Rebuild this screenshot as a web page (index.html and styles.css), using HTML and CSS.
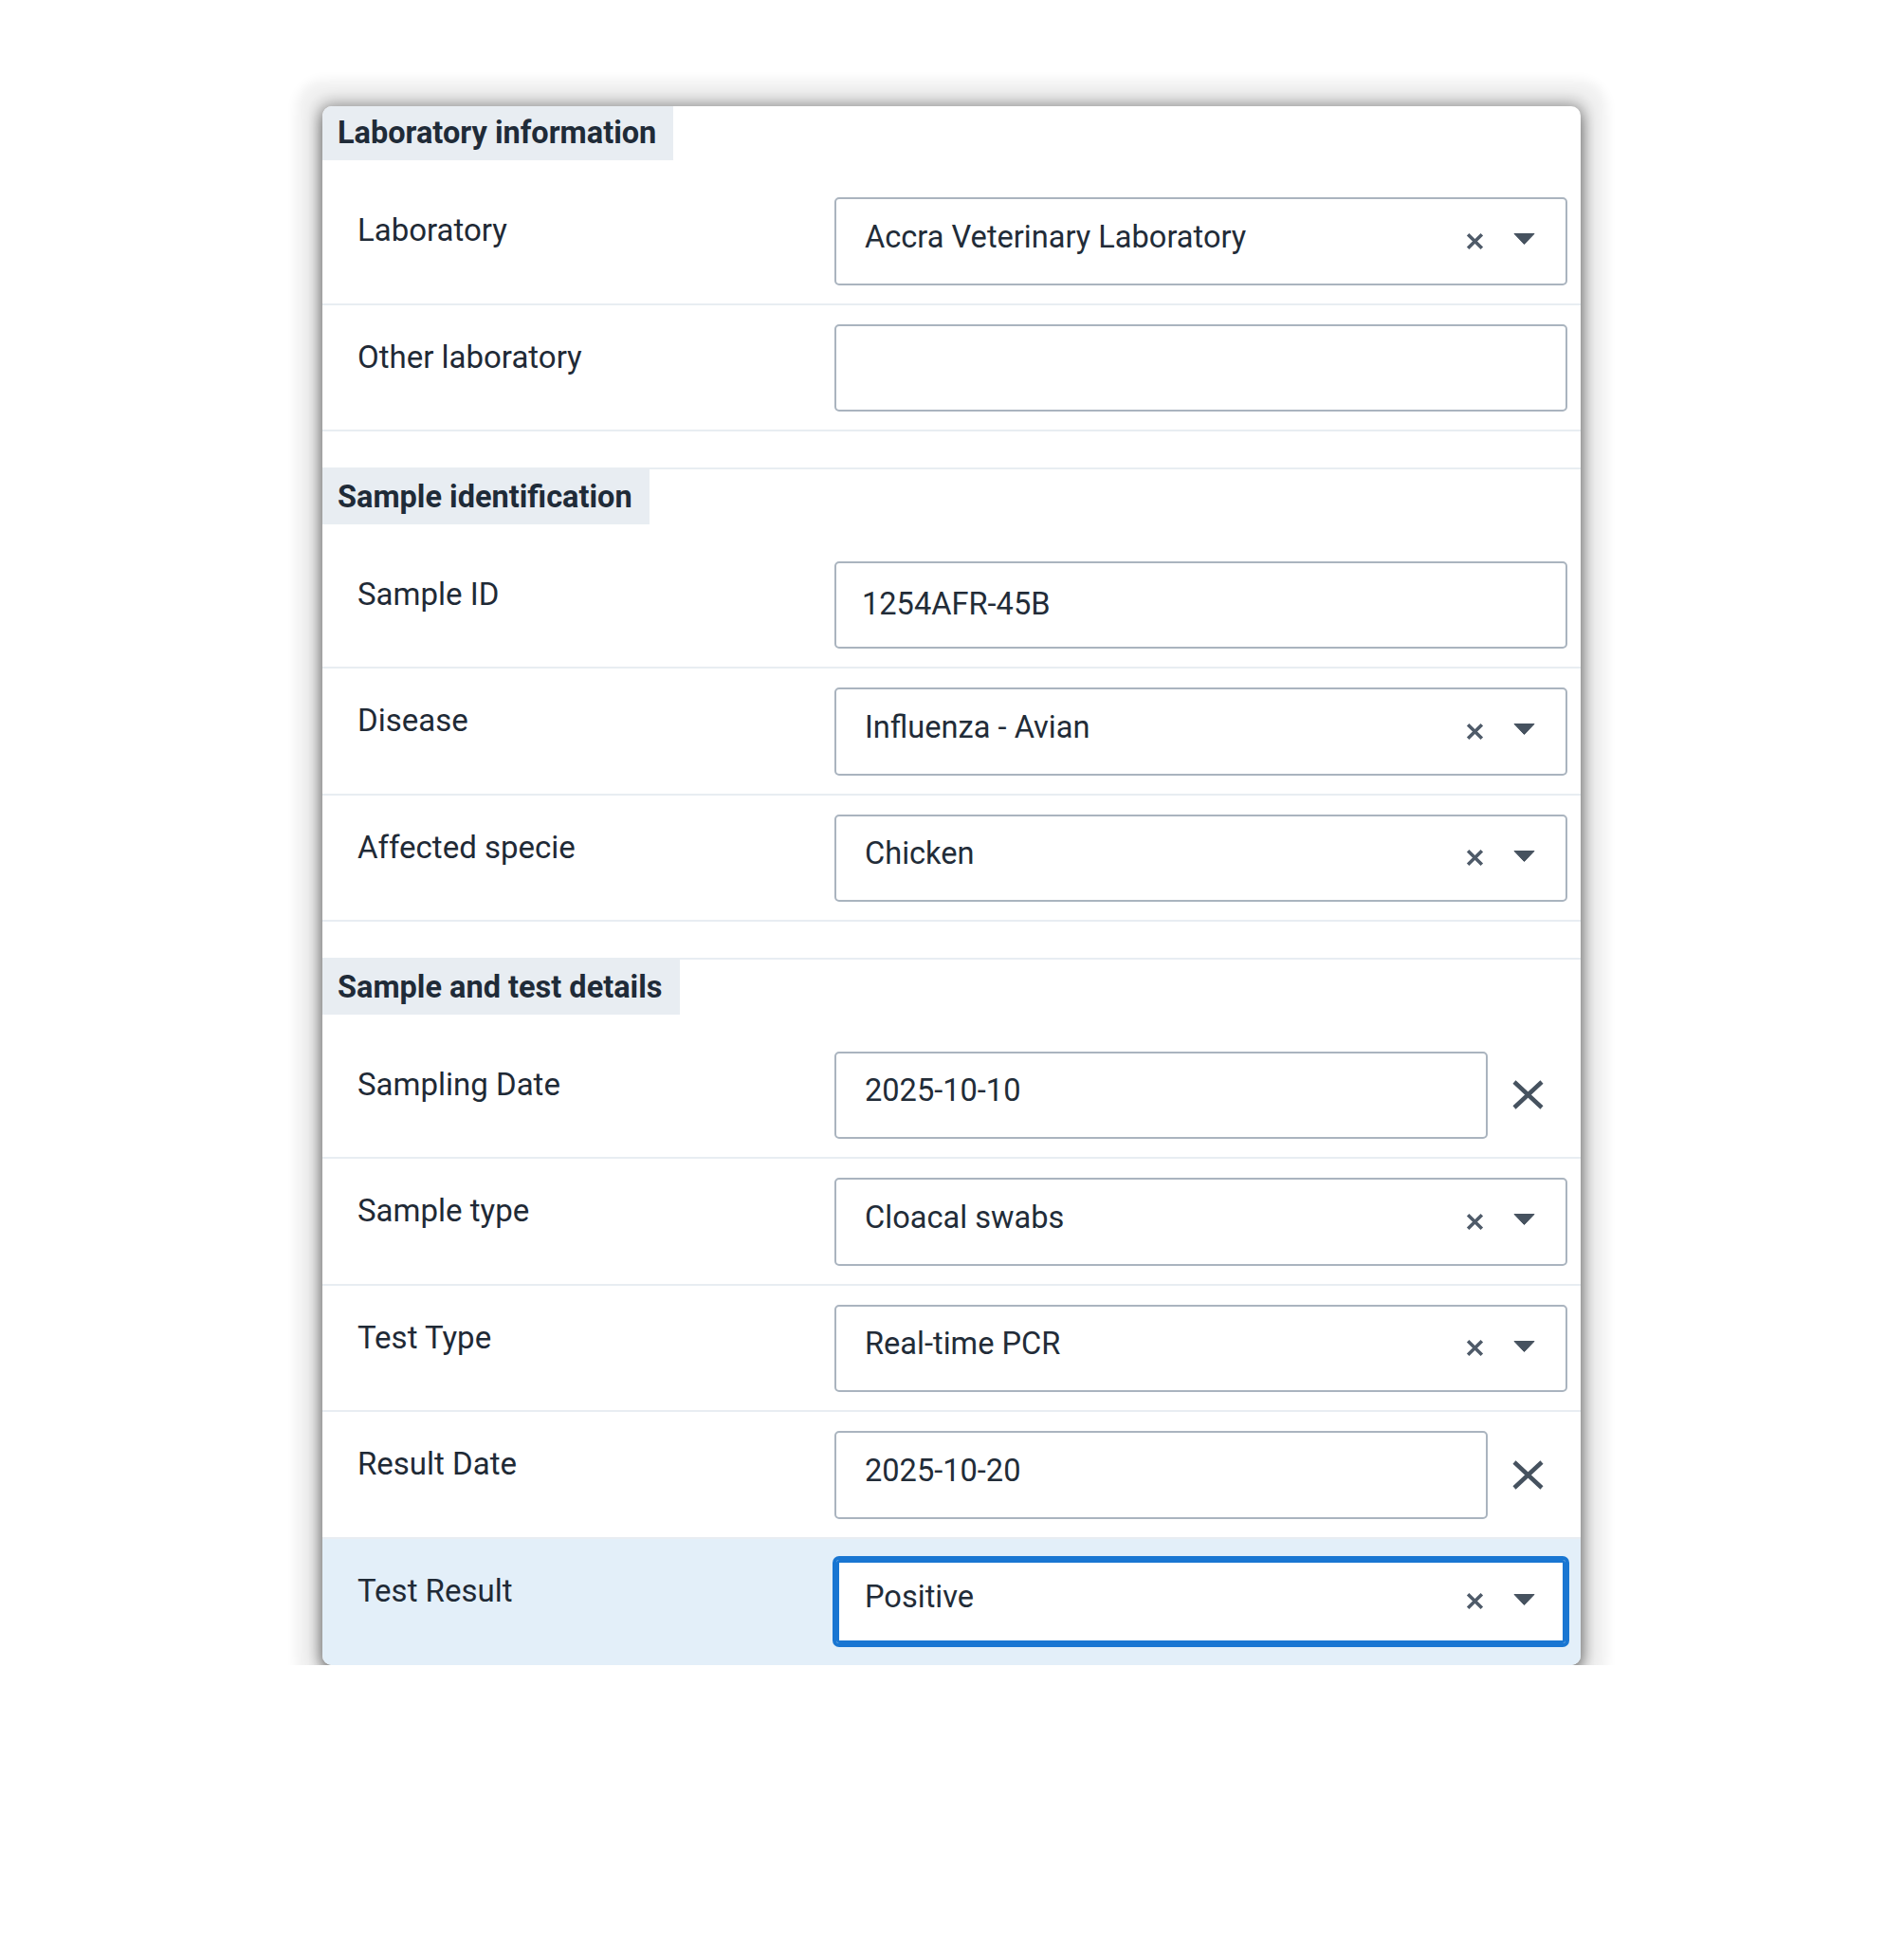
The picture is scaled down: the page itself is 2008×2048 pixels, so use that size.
FILE: index.html
```html
<!DOCTYPE html>
<html lang="en">
<head>
<meta charset="utf-8">
<title>Laboratory form</title>
<link rel="stylesheet" href="styles.css">
</head>
<body>
<div class="page">
  <div class="card">
    <section class="section">
      <h2 class="section-title">Laboratory information</h2>
      <div class="row">
        <div class="label">Laboratory</div>
        <div class="control">
          <div class="select">
            <span class="value">Accra Veterinary Laboratory</span>
            <svg class="clear" viewBox="0 0 20 20"><path d="M3 3L17 17M17 3L3 17"/></svg>
            <svg class="caret" viewBox="0 0 23 12"><path d="M1 0.5H22L11.5 11.5Z"/></svg>
          </div>
        </div>
      </div>
      <div class="row">
        <div class="label">Other laboratory</div>
        <div class="control">
          <div class="input"></div>
        </div>
      </div>
    </section>

    <section class="section">
      <h2 class="section-title">Sample identification</h2>
      <div class="row">
        <div class="label">Sample ID</div>
        <div class="control">
          <div class="input"><span class="value text-value">1254AFR-45B</span></div>
        </div>
      </div>
      <div class="row">
        <div class="label">Disease</div>
        <div class="control">
          <div class="select">
            <span class="value">Influenza - Avian</span>
            <svg class="clear" viewBox="0 0 20 20"><path d="M3 3L17 17M17 3L3 17"/></svg>
            <svg class="caret" viewBox="0 0 23 12"><path d="M1 0.5H22L11.5 11.5Z"/></svg>
          </div>
        </div>
      </div>
      <div class="row">
        <div class="label">Affected specie</div>
        <div class="control">
          <div class="select">
            <span class="value">Chicken</span>
            <svg class="clear" viewBox="0 0 20 20"><path d="M3 3L17 17M17 3L3 17"/></svg>
            <svg class="caret" viewBox="0 0 23 12"><path d="M1 0.5H22L11.5 11.5Z"/></svg>
          </div>
        </div>
      </div>
    </section>

    <section class="section last">
      <h2 class="section-title">Sample and test details</h2>
      <div class="row">
        <div class="label">Sampling Date</div>
        <div class="control date">
          <div class="input"><span class="value">2025-10-10</span></div>
          <div class="date-clear"><svg viewBox="0 0 33 31"><path d="M2 2L31 29M31 2L2 29"/></svg></div>
        </div>
      </div>
      <div class="row">
        <div class="label">Sample type</div>
        <div class="control">
          <div class="select">
            <span class="value">Cloacal swabs</span>
            <svg class="clear" viewBox="0 0 20 20"><path d="M3 3L17 17M17 3L3 17"/></svg>
            <svg class="caret" viewBox="0 0 23 12"><path d="M1 0.5H22L11.5 11.5Z"/></svg>
          </div>
        </div>
      </div>
      <div class="row">
        <div class="label">Test Type</div>
        <div class="control">
          <div class="select">
            <span class="value">Real-time PCR</span>
            <svg class="clear" viewBox="0 0 20 20"><path d="M3 3L17 17M17 3L3 17"/></svg>
            <svg class="caret" viewBox="0 0 23 12"><path d="M1 0.5H22L11.5 11.5Z"/></svg>
          </div>
        </div>
      </div>
      <div class="row">
        <div class="label">Result Date</div>
        <div class="control date">
          <div class="input"><span class="value">2025-10-20</span></div>
          <div class="date-clear"><svg viewBox="0 0 33 31"><path d="M2 2L31 29M31 2L2 29"/></svg></div>
        </div>
      </div>
      <div class="row active">
        <div class="label">Test Result</div>
        <div class="control">
          <div class="select focused">
            <span class="value">Positive</span>
            <svg class="clear" viewBox="0 0 20 20"><path d="M3 3L17 17M17 3L3 17"/></svg>
            <svg class="caret" viewBox="0 0 23 12"><path d="M1 0.5H22L11.5 11.5Z"/></svg>
          </div>
        </div>
      </div>
    </section>
  </div>
</div>
</body>
</html>
```

FILE: styles.css
```css
* {
  box-sizing: border-box;
}

html, body {
  margin: 0;
  padding: 0;
  background: #ffffff;
}

body {
  font-family: Roboto, "Liberation Sans", Arial, sans-serif;
  color: #1f2a36;
}

.page {
  padding: 112px 0 0 340px;
}

.card {
  width: 1327px;
  background: #ffffff;
  border-radius: 10px;
  overflow: hidden;
  box-shadow:
    0 8px 14px rgba(0, 0, 0, 0.32),
    0 0 16px 4px rgba(0, 0, 0, 0.32),
    0 0 12px 28px rgba(0, 0, 0, 0.06);
}

.section {
  border-top: 2px solid #e8edf2;
  padding-bottom: 37.5px;
}

.section:first-child {
  border-top: none;
}

.section.last {
  padding-bottom: 0;
}

.section-title {
  display: inline-block;
  margin: 0 0 19px 0;
  height: 58px;
  line-height: 58px;
  padding: 0 18px 0 16px;
  background: #e8edf2;
  font-size: 32.5px;
  font-weight: 700;
  color: #1f2b38;
}

.section:first-child .section-title {
  height: 57px;
  line-height: 57px;
}

.row {
  display: grid;
  grid-template-columns: 503px 1fr;
  padding: 20px 14px 19px 37px;
  border-bottom: 2px solid #e8edf2;
}

.row.active {
  background: #e3eff9;
  border-bottom: none;
  padding-bottom: 21px;
}

.label {
  font-size: 33px;
  line-height: 1.2;
  margin-top: 15px;
  color: #1f2a36;
}

.control {
  display: flex;
  align-items: center;
}

.select,
.input {
  flex: 1;
  height: 92.5px;
  display: flex;
  align-items: center;
  border: 2px solid #aab4bf;
  border-radius: 5px;
  background: #ffffff;
  padding: 0 32px 0 30px;
}

.value {
  flex: 1;
  font-size: 32.6px;
  line-height: 1.2;
  margin-bottom: 8px;
  color: #222c38;
  white-space: nowrap;
}

.input .text-value {
  margin-left: -3px;
  margin-bottom: 0;
}

.clear {
  width: 21px;
  height: 21px;
  margin-right: 30px;
  fill: none;
  stroke: #4f5b69;
  stroke-width: 3.4;
}

.caret {
  width: 23px;
  height: 12px;
  margin-bottom: 4px;
  fill: #46525f;
  stroke: #46525f;
  stroke-width: 1;
  stroke-linejoin: round;
}

.select.focused {
  border-color: #1976d2;
  box-shadow: 0 0 0 2px #1976d2, inset 0 0 0 3px #1976d2;
}

.date-clear {
  width: 84px;
  flex: none;
  display: flex;
  align-items: center;
  justify-content: center;
}

.date-clear svg {
  width: 33px;
  height: 31px;
  fill: none;
  stroke: #46525f;
  stroke-width: 4.5;
}
```
